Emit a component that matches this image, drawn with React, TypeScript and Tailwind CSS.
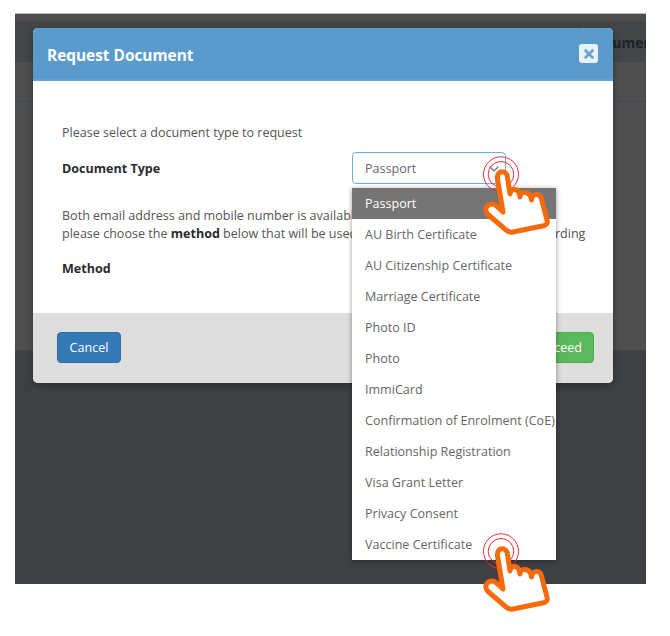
import React from 'react';
import { ChevronDown, X } from 'lucide-react';

const documentTypes = [
  'Passport',
  'AU Birth Certificate',
  'AU Citizenship Certificate',
  'Marriage Certificate',
  'Photo ID',
  'Photo',
  'ImmiCard',
  'Confirmation of Enrolment (CoE)',
  'Relationship Registration',
  'Visa Grant Letter',
  'Privacy Consent',
  'Vaccine Certificate',
];

// pointing hand with click rings, drawn over the page
const HandPointer: React.FC<{ className: string }> = ({ className }) => (
  <svg viewBox="0 0 110 100" className={className} fill="none">
    <circle cx="41" cy="29.300" r="17.500" stroke="#ee2b3a" strokeWidth="1" />
    <circle cx="41" cy="29.300" r="12.800" stroke="#ee2b3a" strokeWidth="1" />
    <path
      d="M37.300 33C37.300 24.500 47 24.500 47.600 33L50 49C50.500 42.500 59 42.500 60 52C60.500 45 70.500 46 71.500 55C72 48 80 48 81.500 54L87 75C88 78 86.500 80 83.500 80.800L53 87C50.500 87.500 48 86.500 46 85L28 69.500C22 63 30 56 36 60.500L43 67Z"
      fill="#fff"
      stroke="#f76a0c"
      strokeWidth="5"
      strokeLinejoin="round"
    />
  </svg>
);

export default function App() {
  return (
    <div className="h-[636px] w-[670px] bg-white pt-[13px] pl-[15px] font-['Open_Sans','Noto_Sans',sans-serif]">
      <div className="relative flex h-[571px] w-[631px] flex-col overflow-hidden bg-[#3e4043]">
        {/* page behind the modal */}
        <div className="h-[8px] border-t border-[#bdbdbd] bg-[#4d4d4d]" />
        <div className="flex h-[41px] justify-end bg-[#43474a]">
          <div className="w-[63px] overflow-hidden border-l border-[#4d5154] pt-[11px] pl-[2px] text-[14px] font-bold whitespace-nowrap text-[#1c2227]">
            Document
          </div>
        </div>
        <div className="h-[40px] border-b border-[#3d4a57] bg-[#4f4f4f]" />
        <div className="h-[248px] bg-[#4f4f4f]" />

        {/* modal */}
        <div className="absolute top-[15px] left-[18px] flex h-[355px] w-[580px] flex-col rounded-[5px] bg-white shadow-[0_2px_8px_rgba(0,0,0,0.35)]">
          <div className="flex h-[53px] items-center justify-between rounded-t-[5px] border-b-2 border-[#5ba5df] bg-[#5b9bcc] pr-[15px] pl-[14px]">
            <h2 className="pt-[5px] text-[15.4px] font-bold text-white">Request Document</h2>
            <button className="flex h-[19px] w-[19px] items-center justify-center rounded-[3px] bg-[#e8f2f9] text-[#6aa3d0]">
              <X size={14} strokeWidth={4.5} />
            </button>
          </div>

          <div className="flex-1 px-[29px] pt-[43px] text-[12.55px] leading-[18px] text-[#555]">
            <p>Please select a document type to request</p>
            <div className="mt-[10px] flex items-center">
              <label className="w-[290px] pt-[2px] font-bold text-[#2b2b2b]">Document Type</label>
              <div className="relative">
                <div className="flex h-[32px] w-[154px] items-center justify-between rounded-[4px] border border-[#66afe9] pt-[1px] pr-[1px] pl-[12px] text-[#666]">
                  Passport
                  <ChevronDown size={16} className="mr-[2px] text-[#777]" />
                </div>
              </div>
            </div>
            <p className="mt-[23px] whitespace-nowrap">
              Both email address and mobile number is available for this applicant,
              <br />
              please choose the <b className="text-[#2b2b2b]">method</b> below that will be used to send a document request regarding
            </p>
            <div className="mt-[17px] font-bold text-[#2b2b2b]">Method</div>
          </div>

          <div className="flex h-[70px] items-center justify-between rounded-b-[5px] bg-[#dedede] pr-[19px] pb-[1px] pl-[24px]">
            <button className="h-[31px] w-[64px] rounded-[4px] border border-[#2e6da4] bg-[#337ab7] pt-[1px] text-[12.55px] text-white">
              Cancel
            </button>
            <button className="h-[31px] w-[72px] rounded-[4px] border border-[#4cae4c] bg-[#5cb85c] pt-[1px] text-[12.55px] text-white">
              Proceed
            </button>
          </div>
        </div>

        {/* open dropdown list */}
        <ul className="absolute top-[175px] left-[337px] w-[204px] bg-white text-[12.55px] text-[#666] shadow-[0_1px_5px_rgba(0,0,0,0.4)]">
          {documentTypes.map((name, i) => (
            <li
              key={name}
              className={
                i === 0
                  ? 'flex h-[31px] items-center bg-[#757575] pt-[2px] pl-[13px] whitespace-nowrap text-white'
                  : 'flex h-[31px] items-center pt-[2px] pl-[13px] whitespace-nowrap'
              }
            >
              {name}
            </li>
          ))}
        </ul>
      </div>

      <HandPointer className="absolute top-[145px] left-[460px] h-[100px] w-[110px]" />
      <HandPointer className="absolute top-[522px] left-[460px] h-[100px] w-[110px]" />
    </div>
  );
}
